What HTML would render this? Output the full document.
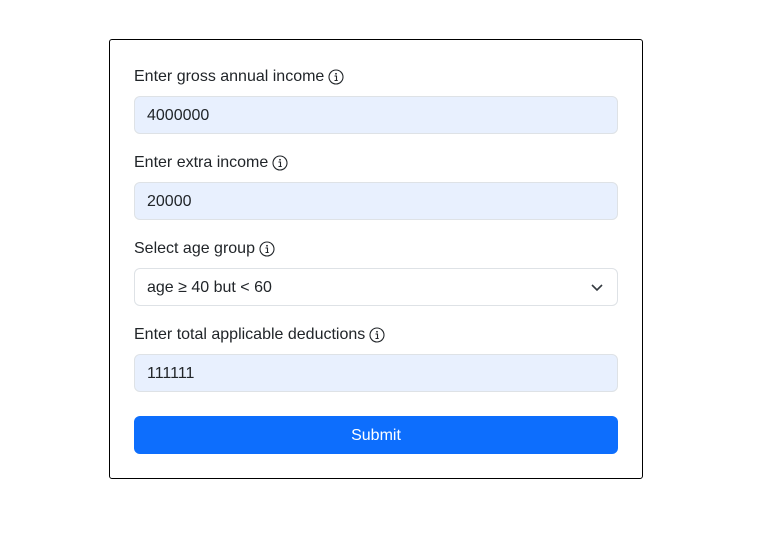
<!DOCTYPE html>
<html><head><style>
body{margin:0;background:#fff;font-family:"Liberation Sans",sans-serif;color:#212529;}
.card{position:absolute;left:109px;top:39px;width:532px;height:438px;border:1px solid #000;border-radius:3px;}
.lbl{position:absolute;left:134px;font-size:16px;line-height:20px;display:flex;align-items:center;}
.lbl svg{margin-left:4px}
.in{position:absolute;left:134px;height:36px;border:1px solid #dee2e6;border-radius:6px;background:#e8f0fe;font-size:16px;line-height:38px;padding-left:12px;width:470px;}
.sel{background:#fff;}
.btn{position:absolute;left:134px;top:416px;width:484px;height:38px;background:#0d6efd;border-radius:6px;color:#fff;font-size:16px;line-height:39px;text-align:center;}
</style></head><body>
<div class="card"></div>
<div class="lbl" style="top:67px">Enter gross annual income <svg width="16" height="16" viewBox="0 0 16 16"><circle cx="8" cy="8" r="7" fill="none" stroke="#212529" stroke-width="1.1"/><circle cx="8" cy="4.8" r="0.9" fill="#212529"/><path d="M6.5 7h2v4.5M6.5 11.5h3.2" stroke="#212529" stroke-width="1.1" fill="none"/></svg></div>
<div class="in" style="top:96px">4000000</div>
<div class="lbl" style="top:153px">Enter extra income <svg width="16" height="16" viewBox="0 0 16 16"><circle cx="8" cy="8" r="7" fill="none" stroke="#212529" stroke-width="1.1"/><circle cx="8" cy="4.8" r="0.9" fill="#212529"/><path d="M6.5 7h2v4.5M6.5 11.5h3.2" stroke="#212529" stroke-width="1.1" fill="none"/></svg></div>
<div class="in" style="top:182px">20000</div>
<div class="lbl" style="top:239px">Select age group <svg width="16" height="16" viewBox="0 0 16 16"><circle cx="8" cy="8" r="7" fill="none" stroke="#212529" stroke-width="1.1"/><circle cx="8" cy="4.8" r="0.9" fill="#212529"/><path d="M6.5 7h2v4.5M6.5 11.5h3.2" stroke="#212529" stroke-width="1.1" fill="none"/></svg></div>
<div class="in sel" style="top:268px">age ≥ 40 but &lt; 60<svg style="position:absolute;right:14px;top:14px" width="12" height="10" viewBox="0 0 12 10"><path d="M1 2l5 5 5-5" stroke="#343a40" stroke-width="1.6" fill="none"/></svg></div>
<div class="lbl" style="top:325px">Enter total applicable deductions <svg width="16" height="16" viewBox="0 0 16 16"><circle cx="8" cy="8" r="7" fill="none" stroke="#212529" stroke-width="1.1"/><circle cx="8" cy="4.8" r="0.9" fill="#212529"/><path d="M6.5 7h2v4.5M6.5 11.5h3.2" stroke="#212529" stroke-width="1.1" fill="none"/></svg></div>
<div class="in" style="top:354px">111111</div>
<div class="btn">Submit</div>
</body></html>
